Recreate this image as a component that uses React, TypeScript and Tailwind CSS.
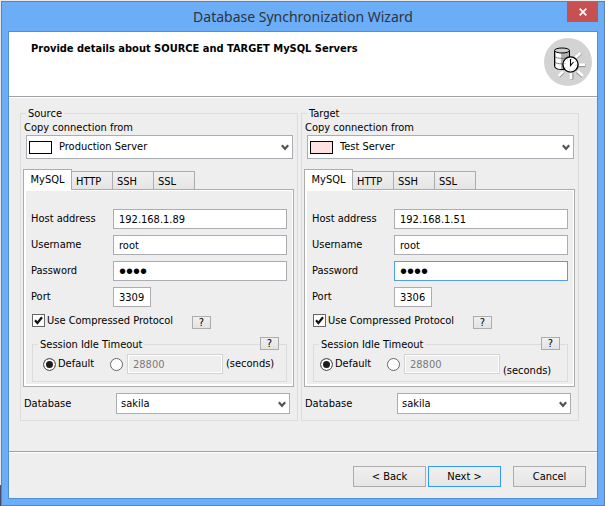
import React from 'react';

type Server = {
  id: string;
  title: string;
  connection: string;
  swatch: string;
  host: string;
  port: string;
  passwordBorder: string;
  timeoutPadding: string;
  secondsAlign: string;
};

const servers: Server[] = [
  {
    id: 'source',
    title: 'Source',
    connection: 'Production Server',
    swatch: 'bg-white',
    host: '192.168.1.89',
    port: '3309',
    passwordBorder: 'border-[#abadb3]',
    timeoutPadding: 'pl-[10px]',
    secondsAlign: 'self-center',
  },
  {
    id: 'target',
    title: 'Target',
    connection: 'Test Server',
    swatch: 'bg-[#ffe1e1]',
    host: '192.168.1.51',
    port: '3306',
    passwordBorder: 'border-[#569de5]',
    timeoutPadding: 'pl-[6px]',
    secondsAlign: 'self-end translate-y-1',
  },
];

const field = 'h-5 min-w-0 border bg-white px-[5px] outline-none';

function Chevron() {
  return (
    <svg
      className="pointer-events-none absolute top-1/2 right-1 -mt-[3px] h-[7px] w-2"
      viewBox="0 0 8 7"
      aria-hidden="true"
    >
      <path d="M0.8 1.2 L4 4.8 L7.2 1.2" fill="none" stroke="#555" strokeWidth="2.2" />
    </svg>
  );
}

function HelpButton({ className, label }: { className: string; label: string }) {
  return (
    <button
      type="button"
      aria-label={label}
      className={
        'h-[13px] w-[19px] border border-[#acacac] bg-linear-to-b from-[#f0f0f0] to-[#e3e3e3] text-center leading-[11px] ' +
        className
      }
    >
      ?
    </button>
  );
}

function Radio({ id, name, checked }: { id: string; name: string; checked?: boolean }) {
  return (
    <input
      type="radio"
      id={id}
      name={name}
      defaultChecked={checked}
      aria-label={checked ? undefined : 'Custom timeout'}
      className="size-[13px] shrink-0 appearance-none rounded-full border border-[#666] bg-white checked:bg-[#1c1c1c] checked:shadow-[inset_0_0_0_2px_#fff]"
    />
  );
}

function ServerPanel({ server }: { server: Server }) {
  const { id } = server;
  return (
    <fieldset className="min-w-0 flex-1 border border-[#dcdcdc] pb-[6px]">
      <legend className="ml-[5px] h-[14px] px-[2px] leading-4">{server.title}</legend>

      <label htmlFor={id + '-connection'} className="block pl-[3px] leading-[15px]">
        Copy connection from
      </label>
      <div className="relative mr-1 ml-[5px]">
        <select
          id={id + '-connection'}
          className="block h-6 w-full appearance-none border border-[#abadb3] bg-white pl-8 outline-none"
        >
          <option>{server.connection}</option>
        </select>
        <span
          className={
            'pointer-events-none absolute top-[6px] left-[3px] h-[13px] w-[23px] border border-black ' + server.swatch
          }
        />
        <Chevron />
      </div>

      <div className="mt-[10px] mr-[3px] ml-[2px]">
        <div role="tablist" className="relative -mb-px flex h-[21px] items-end">
          <button
            type="button"
            role="tab"
            aria-selected="true"
            className="relative z-10 h-[21px] w-[49px] border border-b-0 border-[#acacac] bg-white pb-[1px] text-center"
          >
            MySQL
          </button>
          {['HTTP', 'SSH', 'SSL'].map((tab) => (
            <button
              key={tab}
              type="button"
              role="tab"
              aria-selected="false"
              className="-ml-px h-[19px] w-[42px] border border-[#acacac] bg-linear-to-b from-[#f0f0f0] to-[#e5e5e5] pt-[2px] pl-1 text-left"
            >
              {tab}
            </button>
          ))}
        </div>

        <div
          role="tabpanel"
          className="border border-[#acacac] pt-[19px] pr-[6px] pb-1 pl-[7px] shadow-[inset_2px_-2px_0_#fff,inset_-1px_1px_0_#fff]"
        >
          <div className="grid grid-cols-[82px_1fr] items-center gap-y-[6px]">
            <label htmlFor={id + '-host'}>Host address</label>
            <input id={id + '-host'} defaultValue={server.host} className={field + ' border-[#abadb3]'} />
            <label htmlFor={id + '-user'}>Username</label>
            <input id={id + '-user'} defaultValue="root" className={field + ' border-[#abadb3]'} />
            <label htmlFor={id + '-password'}>Password</label>
            <input
              id={id + '-password'}
              type="password"
              defaultValue="root"
              className={field + " font-['Liberation_Sans',sans-serif] text-[20px] " + server.passwordBorder}
            />
            <label htmlFor={id + '-port'}>Port</label>
            <input
              id={id + '-port'}
              defaultValue={server.port}
              className={field + ' w-[38px] border-[#abadb3]'}
            />
          </div>

          <div className="mt-[7px] ml-px flex h-[15px]">
            <label className="relative flex h-[13px] w-40 items-center gap-[2px] whitespace-nowrap">
              <input
                type="checkbox"
                defaultChecked
                className="peer size-[13px] shrink-0 appearance-none border border-[#666] bg-white"
              />
              <svg
                className="pointer-events-none absolute top-0 left-0 hidden size-[13px] peer-checked:block"
                viewBox="0 0 13 13"
                aria-hidden="true"
              >
                <path d="M3 6.2 L5.4 9 L10 3.2" fill="none" stroke="#111" strokeWidth="2.2" />
              </svg>
              Use Compressed Protocol
            </label>
            <HelpButton label="About compressed protocol" className="self-end" />
          </div>

          <div className="relative mt-2 ml-px">
            <fieldset className="min-w-0 border border-[#dcdcdc] pb-[7px]">
              <legend className="ml-[5px] h-[14px] px-[2px] leading-4">Session Idle Timeout</legend>
              <div className={'flex items-center pt-[3px] ' + server.timeoutPadding}>
                <Radio id={id + '-default'} name={id + '-timeout'} checked />
                <label htmlFor={id + '-default'} className="w-[54px] pl-[2px]">
                  Default
                </label>
                <Radio id={id + '-custom'} name={id + '-timeout'} />
                <input
                  aria-label="Timeout in seconds"
                  disabled
                  defaultValue="28800"
                  className="ml-1 h-5 w-24 border border-[#d4d4d4] bg-[#eee] px-[5px] text-[#7a7a7a] shadow-[inset_0_0_0_1px_#fff]"
                />
                <span className={'pl-[3px] ' + server.secondsAlign}>(seconds)</span>
              </div>
            </fieldset>
            <HelpButton label="About session idle timeout" className="absolute top-0 right-2" />
          </div>
        </div>
      </div>

      <div className="mt-[6px] mr-[7px] ml-[3px] flex items-center">
        <label htmlFor={id + '-database'} className="w-[92px]">
          Database
        </label>
        <div className="relative flex-1">
          <select
            id={id + '-database'}
            className="block h-[21px] w-full appearance-none border border-[#abadb3] bg-white pl-1 outline-none"
          >
            <option>sakila</option>
          </select>
          <Chevron />
        </div>
      </div>
    </fieldset>
  );
}

function ScheduleIcon() {
  return (
    <svg className="size-12 shrink-0" viewBox="0 0 48 48" aria-hidden="true">
      <circle cx="24" cy="24" r="24" fill="#d3d3d3" />
      <path
        d="M32 20 L37 15.5 M34.5 27.8 H41.5 M33 33.8 L38.5 38.5 M28 34 V41.5 M19.5 34 L15 38.8"
        stroke="#999"
        strokeWidth="3"
      />
      <path
        d="M31.5 19.5 L36.5 15 M34.5 26.8 H41 M33.5 33 L39 38 M27 34 V41 M19 33.6 L14.5 38"
        stroke="#fff"
        strokeWidth="2.6"
      />
      <path d="M10.5 12.5 V28.5 C10.5 32.5 25.5 32.5 25.5 28.5 V12.5 Z" fill="#b0b0b0" stroke="#000" />
      <path d="M12 14 V29 C13 30.5 15 31 17 31 V15 Z" fill="#fff" />
      <path d="M11 18.5 C12 21 24 21 25 18.5 M11 24 C12 26.5 24 26.5 25 24" fill="none" stroke="#777" />
      <ellipse cx="18" cy="12.5" rx="7.5" ry="2.5" fill="#cfcfcf" stroke="#000" />
      <circle cx="26.5" cy="26.5" r="7.6" fill="#fff" stroke="#000" strokeWidth="1.4" />
      <circle cx="26.5" cy="26.5" r="5.6" fill="none" stroke="#999" strokeWidth="0.8" strokeDasharray="1 3.4" />
      <path d="M26.5 21 V27.5 L29.5 24" fill="none" stroke="#000" strokeWidth="1.1" />
    </svg>
  );
}

const wizardButton = 'h-[21px] w-[73px] border bg-linear-to-b from-[#f0f0f0] to-[#e5e5e5] text-center';

export default function App() {
  return (
    <div className="flex min-h-screen flex-col bg-[linear-gradient(#e9e9e9_485px,#4a4d63_485px)] pt-px pl-px font-['DejaVu_Sans_Condensed','Noto_Sans',sans-serif] text-[11px] leading-[14px] text-black">
      <div className="flex flex-1 flex-col border border-[#4d86c0] bg-[#6badf6] px-[6px] pb-[6px]">
        <div className="relative flex h-[29px] items-center justify-center">
          <h1 className="font-['Noto_Sans',sans-serif] text-[14px] leading-5 text-[#2b3440]">
            Database Synchronization Wizard
          </h1>
          <button
            type="button"
            aria-label="Close"
            className="absolute top-0 right-0 flex h-5 w-[31px] items-center justify-center bg-[#c75050]"
          >
            <svg className="size-2" viewBox="0 0 8 8" aria-hidden="true">
              <path d="M0.7 0.7 L7.3 7.3 M7.3 0.7 L0.7 7.3" stroke="#fff" strokeWidth="1.7" />
            </svg>
          </button>
        </div>

        <main className="flex flex-1 flex-col border border-[#4f8fd6] bg-[#eee]">
          <header className="flex h-16 items-start justify-between bg-white pt-[6px] pr-[5px] pl-[22px]">
            <h2 className="pt-1 font-bold">Provide details about SOURCE and TARGET MySQL Servers</h2>
            <ScheduleIcon />
          </header>

          <form
            className="flex flex-1 flex-col border-t border-[#a0a0a0]"
            onSubmit={(event) => event.preventDefault()}
          >
            <div className="flex flex-1 items-start gap-[3px] border-t border-white pt-2 pr-[18px] pl-[11px]">
              {servers.map((server) => (
                <ServerPanel key={server.id} server={server} />
              ))}
            </div>

            <footer className="border-t border-[#a0a0a0]">
              <div className="flex justify-end border-t border-white pt-[13px] pr-[11px] pb-[11px]">
                <button type="button" className={wizardButton + ' border-[#acacac]'}>
                  &lt; Back
                </button>
                <button type="submit" className={wizardButton + ' ml-[2px] border-[#3399ff]'}>
                  Next &gt;
                </button>
                <button type="button" className={wizardButton + ' ml-3 border-[#acacac]'}>
                  Cancel
                </button>
              </div>
            </footer>
          </form>
        </main>
      </div>
    </div>
  );
}
